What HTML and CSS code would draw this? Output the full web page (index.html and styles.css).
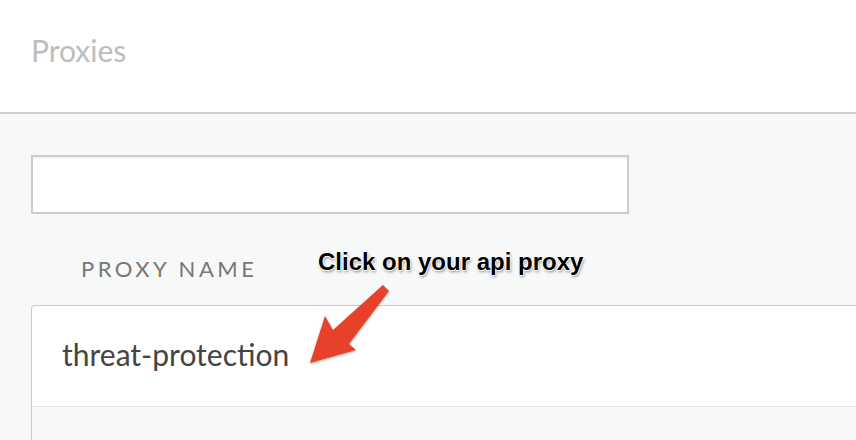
FILE: index.html
```html
<!DOCTYPE html>
<html>
<head>
<meta charset="utf-8">
<link rel="stylesheet" href="styles.css">
</head>
<body>
<header class="topbar"><h1 class="title">Proxies</h1></header>
<main class="content">
  <div class="search"></div>
  <div class="col-head">PROXY NAME</div>
  <div class="table">
    <div class="row">threat-protection</div>
    <div class="row empty"></div>
  </div>
  <div class="callout">Click on your api proxy</div>
  <svg class="arrow" width="90" height="90" viewBox="300 280 90 90">
    <defs>
      <filter id="sh" x="-20%" y="-20%" width="140%" height="140%">
        <feDropShadow dx="0" dy="1" stdDeviation="1" flood-color="#000" flood-opacity="0.35"/>
      </filter>
    </defs>
    <polygon filter="url(#sh)" fill="#e8402a" points="310,363 325,316 333,330 383,285 389,291 349,344 356,350"/>
  </svg>
</main>
</body>
</html>
```
FILE: styles.css
```css
html, body { margin: 0; padding: 0; }
body {
  width: 856px;
  height: 440px;
  overflow: hidden;
  background: #f7f8f8;
  font-family: Lato, "Open Sans", sans-serif;
}
.topbar {
  height: 114px;
  background: #fff;
  border-bottom: 2px solid #cfcfcf;
  box-sizing: border-box;
  padding: 30px 31px 0;
}
.title {
  margin: 0;
  font-weight: 400;
  font-size: 30px;
  line-height: 40px;
  color: #bdbdbd;
}
.content {
  position: relative;
  padding: 41px 0 0 31px;
}
.search {
  width: 598px;
  height: 59px;
  box-sizing: border-box;
  border: 2px solid #cccccc;
  background: #fff;
  box-shadow: inset 0 3px 3px -2px rgba(0,0,0,0.08);
}
.col-head {
  margin: 40px 0 0 50px;
  height: 51px;
  font-size: 22px;
  letter-spacing: 3.5px;
  color: #777;
  line-height: 30px;
}
.table {
  border: 1.5px solid #cccccc;
  border-right: none;
  border-radius: 4px 0 0 0;
  background: #fff;
}
.row {
  height: 101px;
  box-sizing: border-box;
  padding: 0 0 4px 30px;
  display: flex;
  align-items: center;
  font-size: 30px;
  color: #444;
  border-bottom: 1.5px solid #e6e6e6;
}
.row.empty { background: #f7f8f8; border-bottom: none; height: 40px; padding: 0; }
.callout {
  position: absolute;
  left: 318px;
  top: 134px;
  font-family: "Liberation Sans", Arial, sans-serif;
  font-weight: 700;
  font-size: 24px;
  line-height: 28px;
  color: #000;
  text-shadow: -1px 0 0 #fff, 1px 0 0 #fff, 0 -1px 0 #fff, 0 1px 0 #fff, 1px 2px 3px rgba(0,0,0,0.45);
}
.arrow {
  position: absolute;
  left: 300px;
  top: 166px;
}
```
